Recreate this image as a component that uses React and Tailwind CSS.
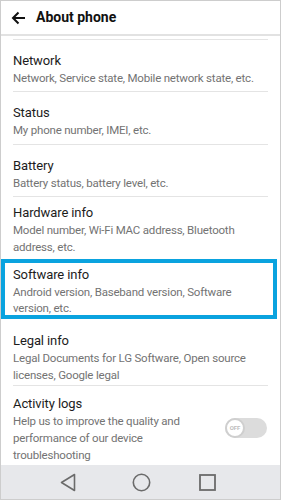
import React from "react";

const font = { fontFamily: "Roboto, 'Noto Sans', Arial, sans-serif" };

function Item({ title, lines, className = "", divider = true, children }) {
  return (
    <div className={`mx-3 ${divider ? "border-b border-[#e4e4e4]" : ""} ${className}`}>
      <div className="flex items-center">
        <div className="flex-1">
          <div className="text-[13px] leading-[18px] tracking-[-0.1px] text-[#1c1c1c]">{title}</div>
          {lines.map((l) => (
            <div
              key={l}
              className="text-[11.5px] leading-[17px] tracking-[-0.2px] text-[#737373] whitespace-nowrap"
            >
              {l}
            </div>
          ))}
        </div>
        {children}
      </div>
    </div>
  );
}

export default function App() {
  return (
    <div
      className="w-[281px] h-[500px] overflow-hidden bg-white border border-[#cdcdcd] flex flex-col"
      style={font}
    >
      <header className="h-[35px] shrink-0 flex items-center border-b-2 border-[#e2e2e2] bg-white">
        <svg width="15" height="14" viewBox="0 0 15 14" className="ml-[10px]" fill="none">
          <path d="M14 7H2M7.5 1.5 2 7l5.5 5.5" stroke="#111" strokeWidth="2" />
        </svg>
        <span className="ml-[10px] text-[14px] font-bold text-[#111]">About phone</span>
      </header>

      <div className="flex-1 flex flex-col">
        <div className="mx-3 h-[4px] border-b border-[#e4e4e4] shrink-0" />
        <Item
          title="Network"
          lines={["Network, Service state, Mobile network state, etc."]}
          className="pt-[12px] pb-[4px]"
        />
        <Item title="Status" lines={["My phone number, IMEI, etc."]} className="pt-[12px] pb-[5px]" />
        <Item title="Battery" lines={["Battery status, battery level, etc."]} className="pt-[12px] pb-[4px]" />
        <Item
          title="Hardware info"
          lines={["Model number, Wi-Fi MAC address, Bluetooth", "address, etc."]}
          className="pt-[7px] pb-[3px]"
          divider={false}
        />
        <div className="h-[60px] shrink-0 border-4 border-[#0aa3df] ml-0 mr-[3px] pl-[8px] pt-[3px]">
          <div className="text-[13px] leading-[18px] tracking-[-0.1px] text-[#1c1c1c]">Software info</div>
          <div className="text-[11.5px] leading-[16px] tracking-[-0.2px] text-[#737373] whitespace-nowrap">
            Android version, Baseband version, Software
          </div>
          <div className="text-[11.5px] leading-[16px] tracking-[-0.2px] text-[#737373] whitespace-nowrap">
            version, etc.
          </div>
        </div>
        <Item
          title="Legal info"
          lines={["Legal Documents for LG Software, Open source", "licenses, Google legal"]}
          className="pt-[13px] pb-[1px]"
        />
        <Item
          title="Activity logs"
          lines={["Help us to improve the quality and", "performance of our device", "troubleshooting"]}
          className="pt-[9px]"
          divider={false}
        >
          <div className="relative w-[42px] h-[20px] rounded-full bg-[#dcdcdc] mr-[1px] -mt-[3px]">
            <div className="absolute left-0 top-0 w-[20px] h-[20px] rounded-full bg-white border-2 border-[#cfcfcf] flex items-center justify-center">
              <span className="text-[6px] font-bold text-[#bdbdbd] leading-none">OFF</span>
            </div>
          </div>
        </Item>
      </div>

      <nav className="h-[34px] shrink-0 bg-[#e7e8eb] flex items-center">
        <svg width="16" height="19" viewBox="0 0 16 19" className="ml-[59px]" fill="none">
          <path d="M14.5 1.5v16L1.5 9.5z" stroke="#6b6b6b" strokeWidth="1.6" strokeLinejoin="round" />
        </svg>
        <svg width="19" height="19" viewBox="0 0 19 19" className="ml-[56px]" fill="none">
          <circle cx="9.5" cy="9.5" r="8.2" stroke="#6b6b6b" strokeWidth="1.6" />
        </svg>
        <svg width="17" height="17" viewBox="0 0 17 17" className="ml-[48px]" fill="none">
          <rect x="1" y="1" width="15" height="15" stroke="#6b6b6b" strokeWidth="1.8" />
        </svg>
      </nav>
    </div>
  );
}
